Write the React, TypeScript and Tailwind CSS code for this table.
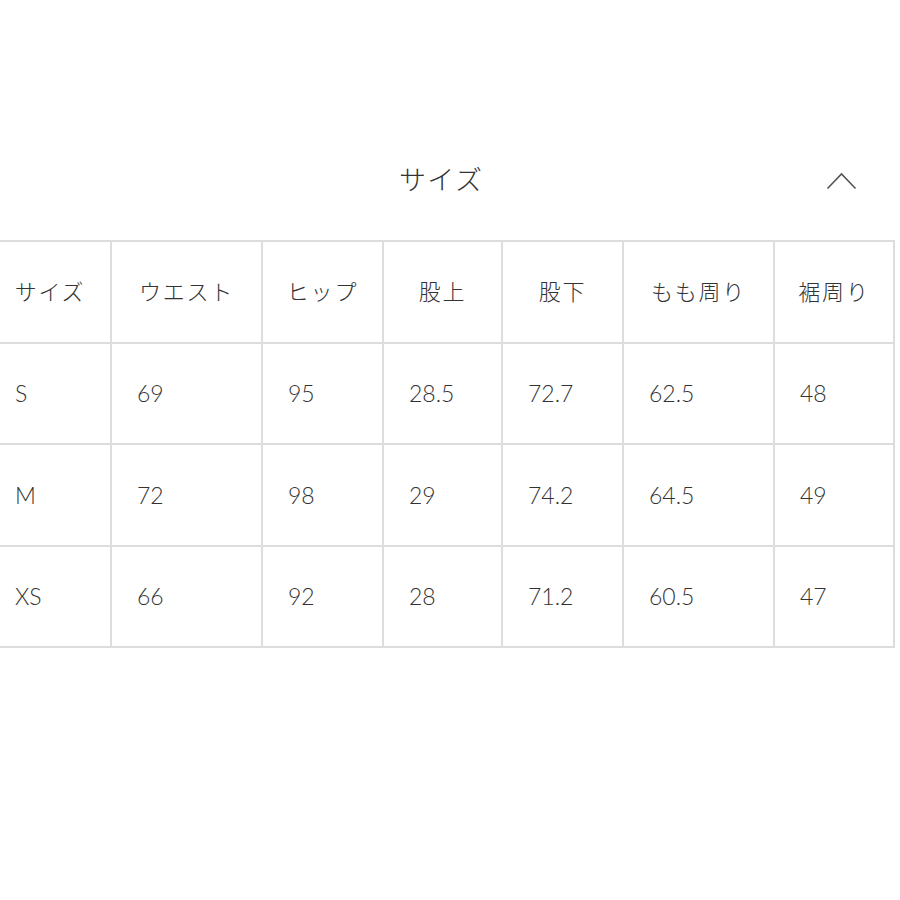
const headers = ["サイズ", "ウエスト", "ヒップ", "股上", "股下", "もも周り", "裾周り"];

const rows = [
  ["S", "69", "95", "28.5", "72.7", "62.5", "48"],
  ["M", "72", "98", "29", "74.2", "64.5", "49"],
  ["XS", "66", "92", "28", "71.2", "60.5", "47"],
];

const widths = ["w-[122px]", "w-[151px]", "w-[121px]", "w-[119px]", "w-[121px]", "w-[151px]", "w-[120px]"];

export default function App() {
  return (
    <div
      className="w-[900px] h-[900px] bg-white overflow-hidden text-[#333333]"
      style={{ fontFamily: 'Lato, "Noto Sans CJK JP", sans-serif' }}
    >
      {/* Section header */}
      <div className="flex items-center pt-[160px] h-[198px]">
        <h2 className="ml-[399px] text-[27px] font-light leading-none tracking-[0.05em]">サイズ</h2>
        <svg className="ml-auto mr-[43px] mt-[4px]" width="31" height="18" viewBox="0 0 31 18" fill="none">
          <path d="M1.5 16.5 L15.5 2 L29.5 16.5" stroke="#555" strokeWidth="1.6" />
        </svg>
      </div>

      {/* Size table */}
      <div className="mt-[42px] ml-[-12px]">
        <table className="border-collapse table-fixed">
          <thead>
            <tr className="h-[101.5px]">
              {headers.map((h, i) => (
                <th
                  key={h}
                  className={`${widths[i]} border-2 border-[#dddddd] text-center font-light text-[22px] tracking-[0.08em]`}
                >
                  {h}
                </th>
              ))}
            </tr>
          </thead>
          <tbody>
            {rows.map((r) => (
              <tr key={r[0]} className="h-[101.5px]">
                {r.map((c, i) => (
                  <td
                    key={i}
                    className={`${widths[i]} border-2 border-[#dddddd] pl-[25px] text-left text-[23px] font-light`}
                  >
                    {c}
                  </td>
                ))}
              </tr>
            ))}
          </tbody>
        </table>
      </div>
    </div>
  );
}
